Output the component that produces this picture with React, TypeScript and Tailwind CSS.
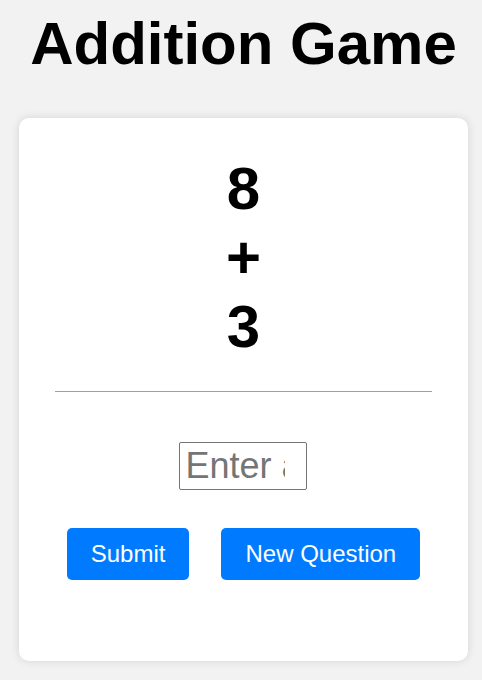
import { useState } from "react";

const randomNumber = () => Math.floor(Math.random() * 10);

export default function App() {
  const [a, setA] = useState(8);
  const [b, setB] = useState(3);
  const [answer, setAnswer] = useState("");

  const newQuestion = () => {
    setA(randomNumber());
    setB(randomNumber());
    setAnswer("");
  };

  return (
    <div className="min-h-[680px] bg-[#f2f2f2] pt-[9px] pl-[5px] font-['Liberation_Sans',Arial,sans-serif] text-black">
      <h1 className="text-center text-[60px] font-bold leading-[69px]">Addition Game</h1>

      <div className="ml-[14px] mt-[40px] w-[449px] rounded-[10px] bg-white px-[36px] pt-[36px] pb-[81px] shadow-[0_0_10px_rgba(0,0,0,0.12)]">
        <div className="text-center text-[60px] font-bold leading-[69px]">
          <div>{a}</div>
          <div>+</div>
          <div>{b}</div>
        </div>

        <hr className="mt-[30px] border-t border-[#a0a0a0]" />

        <div className="mt-[50px] flex justify-center">
          <input
            type="number"
            value={answer}
            onChange={(e) => setAnswer(e.target.value)}
            placeholder="Enter answer"
            className="h-[48px] w-[128px] -translate-x-[1px] rounded-[2px] border border-[#767676] bg-white px-[6px] text-[36px] placeholder:text-[#757575]"
          />
        </div>

        <div className="mt-[38px] flex justify-center gap-8">
          <button className="rounded-[5px] bg-[#007bff] px-6 py-3 text-[24px] leading-[28px] text-white">
            Submit
          </button>
          <button
            onClick={newQuestion}
            className="rounded-[5px] bg-[#007bff] px-6 py-3 text-[24px] leading-[28px] text-white"
          >
            New Question
          </button>
        </div>
      </div>
    </div>
  );
}
